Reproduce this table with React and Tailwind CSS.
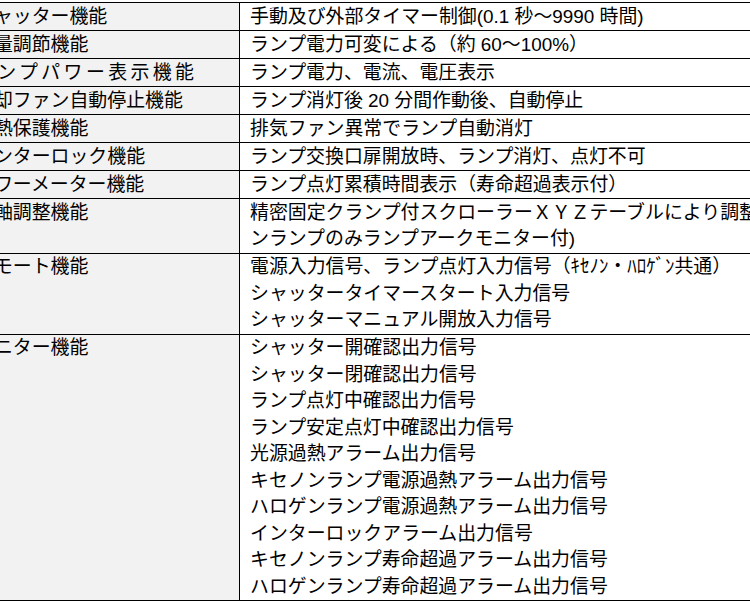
const rows = [
  { label: "シャッター機能", lines: ["手動及び外部タイマー制御(0.1 秒～9990 時間)"] },
  { label: "光量調節機能", lines: ["ランプ電力可変による（約 60～100%）"] },
  { label: "ランプパワー表示機能", wide: true, lines: ["ランプ電力、電流、電圧表示"] },
  { label: "冷却ファン自動停止機能", lines: ["ランプ消灯後 20 分間作動後、自動停止"] },
  { label: "過熱保護機能", lines: ["排気ファン異常でランプ自動消灯"] },
  { label: "インターロック機能", lines: ["ランプ交換口扉開放時、ランプ消灯、点灯不可"] },
  { label: "アワーメーター機能", lines: ["ランプ点灯累積時間表示（寿命超過表示付）"] },
  {
    label: "光軸調整機能",
    lines: [
      "精密固定クランプ付スクローラーＸＹＺテーブルにより調整（キセノ",
      "ンランプのみランプアークモニター付)",
    ],
  },
  {
    label: "リモート機能",
    lines: [
      "電源入力信号、ランプ点灯入力信号（ｷｾﾉﾝ・ﾊﾛｹﾞﾝ共通）",
      "シャッタータイマースタート入力信号",
      "シャッターマニュアル開放入力信号",
    ],
  },
  {
    label: "モニター機能",
    lines: [
      "シャッター開確認出力信号",
      "シャッター閉確認出力信号",
      "ランプ点灯中確認出力信号",
      "ランプ安定点灯中確認出力信号",
      "光源過熱アラーム出力信号",
      "キセノンランプ電源過熱アラーム出力信号",
      "ハロゲンランプ電源過熱アラーム出力信号",
      "インターロックアラーム出力信号",
      "キセノンランプ寿命超過アラーム出力信号",
      "ハロゲンランプ寿命超過アラーム出力信号",
    ],
  },
];

export default function App() {
  return (
    <div className="w-[750px] h-[613px] overflow-hidden bg-white pt-[2px] font-['Liberation_Sans','Noto_Sans_CJK_JP',sans-serif] text-[18.9px] leading-[26.5px] text-black">
      <div className="ml-[-36px] w-[900px] border-t border-black">
        {rows.map((row) => (
          <div key={row.label} className="grid grid-cols-[276px_1fr] border-b border-black">
            <div
              className={
                "bg-[#f2f2f2] border-r border-black pl-[11px] pt-[0.5px] whitespace-nowrap " +
                (row.wide ? "tracking-[3.4px]" : "")
              }
            >
              {row.label}
            </div>
            <div className="pl-[10px] pt-[0.5px] whitespace-nowrap">
              {row.lines.map((line, i) => (
                <div key={i}>{line}</div>
              ))}
            </div>
          </div>
        ))}
      </div>
    </div>
  );
}
